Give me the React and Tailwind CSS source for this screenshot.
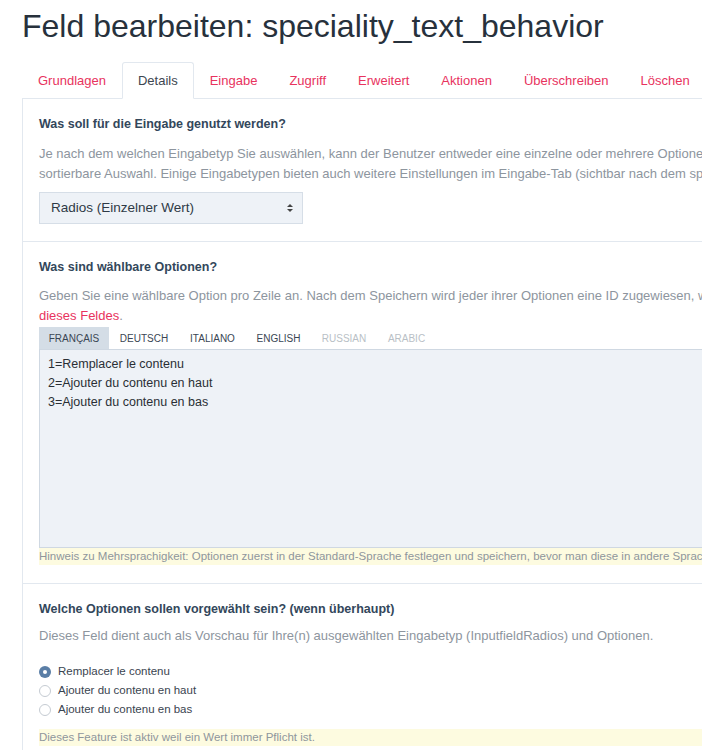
import { useState } from 'react';

const tabs = ['Grundlagen', 'Details', 'Eingabe', 'Zugriff', 'Erweitert', 'Aktionen', 'Überschreiben', 'Löschen'];
const langs = [
  { label: 'Français', w: 'w-[70px]' },
  { label: 'Deutsch', w: 'w-[70px]' },
  { label: 'Italiano', w: 'w-[67px]' },
  { label: 'English', w: 'w-[65px]' },
  { label: 'Russian', w: 'w-[66px]', off: true },
  { label: 'Arabic', w: 'w-[59px]', off: true },
];
const options = ['Remplacer le contenu', 'Ajouter du contenu en haut', 'Ajouter du contenu en bas'];
const values = {
  'Français': '1=Remplacer le contenu\n2=Ajouter du contenu en haut\n3=Ajouter du contenu en bas',
};

function Radio({ checked }) {
  return checked ? (
    <span className="w-[12px] h-[12px] rounded-full bg-[#5a7ea6] flex items-center justify-center shrink-0">
      <span className="w-[4px] h-[4px] rounded-full bg-white" />
    </span>
  ) : (
    <span className="w-[12px] h-[12px] rounded-full border border-[#c5cbd2] bg-white shrink-0" />
  );
}

export default function App() {
  const [activeTab] = useState('Details');
  const [lang, setLang] = useState('Français');
  const [picked, setPicked] = useState(0);

  return (
    <div className="w-[702px] h-[750px] overflow-hidden bg-white font-['Liberation_Sans',Arial,sans-serif]">
      <div className="w-[1000px] pl-[22px]">
        <h1 className="mt-[8px] text-[32px] leading-9 text-[#27313c] font-normal">
          Feld bearbeiten: speciality_text_behavior
        </h1>

        {/* main tabs */}
        <div className="mt-[18px] flex -mb-px relative">
          {tabs.map((t) => (
            <div
              key={t}
              className={
                t === activeTab
                  ? 'h-[37px] px-[15px] flex items-center text-[13px] text-[#3d4650] bg-white border border-[#e2e8ef] border-b-white rounded-t-[3px]'
                  : 'h-[37px] px-[15px] flex items-center text-[13px] text-[#e8335e] border border-transparent'
              }
            >
              {t}
            </div>
          ))}
        </div>

        <div className="border-t border-l border-[#e2e8ef]">
          {/* section 1 */}
          <div className="pl-4 pt-4 pb-[17px] border-b border-[#e2e8ef]">
            <h3 className="text-[12.5px] leading-[18px] font-bold text-[#33475b]">Was soll für die Eingabe genutzt werden?</h3>
            <p className="mt-[11px] text-[13px] leading-5 text-[#8d959e] whitespace-nowrap">
              Je nach dem welchen Eingabetyp Sie auswählen, kann der Benutzer entweder eine einzelne oder mehrere Optionen auswählen oder eine
              <br />
              sortierbare Auswahl. Einige Eingabetypen bieten auch weitere Einstellungen im Eingabe-Tab (sichtbar nach dem speichern).
            </p>
            <div className="mt-[8px] w-[264px] h-[32px] bg-[#eef2f7] border border-[#d6dee7] flex items-center justify-between pl-[11px] pr-[8px]">
              <span className="text-[13.5px] text-[#2e3a46]">Radios (Einzelner Wert)</span>
              <svg width="8" height="10" viewBox="0 0 8 10">
                <path d="M4 1 L7 4 L1 4 Z" fill="#444" />
                <path d="M4 9 L7 6 L1 6 Z" fill="#444" />
              </svg>
            </div>
          </div>

          {/* section 2 */}
          <div className="pl-4 pt-4 pb-[18px] border-b border-[#e2e8ef]">
            <h3 className="text-[12.5px] leading-[18px] font-bold text-[#33475b]">Was sind wählbare Optionen?</h3>
            <p className="mt-[10px] text-[13px] leading-5 text-[#8d959e] whitespace-nowrap">
              Geben Sie eine wählbare Option pro Zeile an. Nach dem Speichern wird jeder ihrer Optionen eine ID zugewiesen, welche Sie hier sehen. Weitere Infos
              <br />
              <span className="text-[#e8335e]">dieses Feldes</span>.
            </p>
            <div className="mt-px flex">
              {langs.map((l) => (
                <button
                  key={l.label}
                  onClick={() => setLang(l.label)}
                  className={
                    (lang === l.label ? 'bg-[#d4dde6] ' : '') +
                    l.w +
                    ' h-[22px] flex items-center justify-center text-[10px] uppercase ' +
                    (l.off ? 'text-[#b9bfc6]' : 'text-[#3a4654]')
                  }
                >
                  {l.label}
                </button>
              ))}
            </div>
            <textarea
              readOnly
              value={values[lang] || ''}
              className="block w-[900px] h-[199px] bg-[#eef2f7] border border-[#cfd8e2] px-2 py-[5px] text-[12.5px] leading-[19px] text-[#2a2f35] resize-none outline-none"
            />
            <p className="h-[17px] bg-[#fdfbe0] text-[11.5px] leading-[17px] text-[#8f969c] whitespace-nowrap">
              Hinweis zu Mehrsprachigkeit: Optionen zuerst in der Standard-Sprache festlegen und speichern, bevor man diese in andere Sprachen übersetzt.
            </p>
          </div>

          {/* section 3 */}
          <div className="pl-4 pt-4 pb-4">
            <h3 className="text-[12.5px] leading-[18px] font-bold text-[#33475b]">Welche Optionen sollen vorgewählt sein? (wenn überhaupt)</h3>
            <p className="mt-[8px] text-[13px] leading-5 text-[#8d959e] whitespace-nowrap">
              Dieses Feld dient auch als Vorschau für Ihre(n) ausgewählten Eingabetyp (InputfieldRadios) und Optionen.
            </p>
            <div className="mt-[16px] flex flex-col">
              {options.map((o, i) => (
                <label key={o} onClick={() => setPicked(i)} className="h-[19px] flex items-center gap-[7px] text-[11.5px] text-[#3a4450]">
                  <Radio checked={picked === i} />
                  {o}
                </label>
              ))}
            </div>
            <p className="mt-[10px] h-[17px] bg-[#fdfbe0] text-[11.5px] leading-[17px] text-[#8f969c] whitespace-nowrap">
              Dieses Feature ist aktiv weil ein Wert immer Pflicht ist.
            </p>
          </div>
        </div>
      </div>
    </div>
  );
}
